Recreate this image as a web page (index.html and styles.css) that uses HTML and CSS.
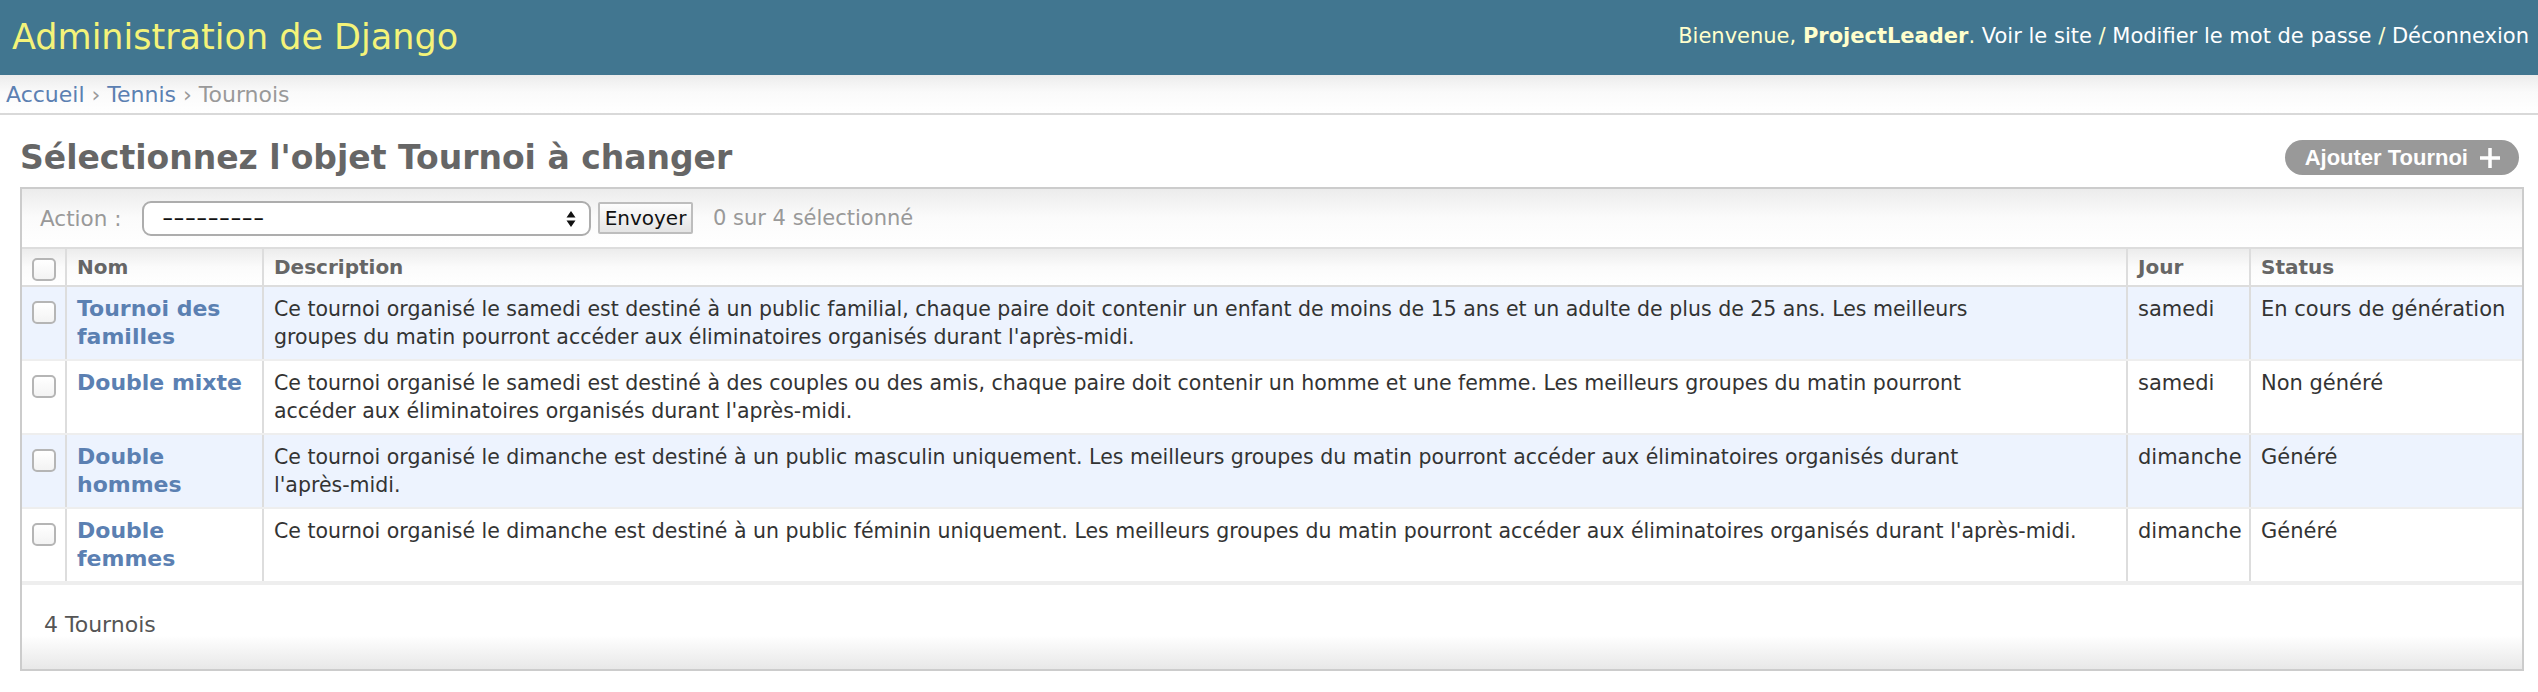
FILE: index.html
```html
<!DOCTYPE html>
<html lang="fr">
<head>
<meta charset="utf-8">
<title>Sélectionnez l'objet Tournoi à changer | Site d'administration de Django</title>
<link rel="stylesheet" href="styles.css">
</head>
<body>
<div class="header">
  <div class="branding">Administration de Django</div>
  <div class="user-tools">Bienvenue, <strong>ProjectLeader</strong>. <a href="#">Voir le site</a> / <a href="#">Modifier le mot de passe</a> / <a href="#">Déconnexion</a></div>
</div>
<div class="breadcrumbs"><a href="#">Accueil</a> › <a href="#">Tennis</a> › Tournois</div>
<div class="content">
  <div class="title-row">
    <h1 class="page-title">Sélectionnez l'objet Tournoi à changer</h1>
    <a class="addlink" href="#">Ajouter Tournoi
      <svg class="plus" width="24" height="24" viewBox="0 0 24 24"><path d="M12 2v20M2 12h20" stroke="#fff" stroke-width="3.5" fill="none"/></svg>
    </a>
  </div>
  <div class="module">
    <div class="actions">
      <span class="action-label">Action :</span>
      <div class="select">
        <span class="select-text">---------</span>
        <svg class="select-arrows" width="10" height="18" viewBox="0 0 10 18"><path d="M5 1 L9.5 7.5 H0.5 Z M5 17 L9.5 10.5 H0.5 Z" fill="#111"/></svg>
      </div>
      <button class="go" type="button">Envoyer</button>
      <span class="counter">0 sur 4 sélectionné</span>
    </div>
    <table class="result-list">
      <colgroup>
        <col class="c-check"><col class="c-name"><col class="c-desc"><col class="c-day"><col class="c-status">
      </colgroup>
      <thead>
        <tr>
          <th class="check"><span class="cb"></span></th>
          <th>Nom</th>
          <th>Description</th>
          <th>Jour</th>
          <th>Status</th>
        </tr>
      </thead>
      <tbody>
        <tr class="row1">
          <td class="check"><span class="cb"></span></td>
          <th class="name"><a href="#">Tournoi des familles</a></th>
          <td class="desc">Ce tournoi organisé le samedi est destiné à un public familial, chaque paire doit contenir un enfant de moins de 15 ans et un adulte de plus de 25 ans. Les meilleurs<br>groupes du matin pourront accéder aux éliminatoires organisés durant l'après-midi.</td>
          <td>samedi</td>
          <td>En cours de génération</td>
        </tr>
        <tr class="row2">
          <td class="check"><span class="cb"></span></td>
          <th class="name"><a href="#">Double mixte</a></th>
          <td class="desc">Ce tournoi organisé le samedi est destiné à des couples ou des amis, chaque paire doit contenir un homme et une femme. Les meilleurs groupes du matin pourront<br>accéder aux éliminatoires organisés durant l'après-midi.</td>
          <td>samedi</td>
          <td>Non généré</td>
        </tr>
        <tr class="row1">
          <td class="check"><span class="cb"></span></td>
          <th class="name"><a href="#">Double hommes</a></th>
          <td class="desc">Ce tournoi organisé le dimanche est destiné à un public masculin uniquement. Les meilleurs groupes du matin pourront accéder aux éliminatoires organisés durant<br>l'après-midi.</td>
          <td>dimanche</td>
          <td>Généré</td>
        </tr>
        <tr class="row2">
          <td class="check"><span class="cb"></span></td>
          <th class="name"><a href="#">Double femmes</a></th>
          <td class="desc">Ce tournoi organisé le dimanche est destiné à un public féminin uniquement. Les meilleurs groupes du matin pourront accéder aux éliminatoires organisés durant l'après-midi.</td>
          <td>dimanche</td>
          <td>Généré</td>
        </tr>
      </tbody>
    </table>
    <p class="paginator">4 Tournois</p>
  </div>
</div>
</body>
</html>
```
FILE: styles.css
```css
html, body {
  margin: 0;
  padding: 0;
  background: #fff;
}
body {
  font-family: "DejaVu Sans", "Lucida Grande", Verdana, sans-serif;
  color: #333;
  font-size: 20px;
}
a {
  text-decoration: none;
}

/* Header */
.header {
  height: 75px;
  background: #417690;
  display: flex;
  align-items: center;
  justify-content: space-between;
  padding: 0 9px 0 12px;
  box-sizing: border-box;
}
.branding {
  color: #f4f379;
  font-size: 35px;
  line-height: 42px;
  padding-bottom: 2px;
}
.user-tools {
  color: #ffc;
  font-size: 21px;
  padding-bottom: 4px;
}
.user-tools a {
  color: #fff;
}

/* Breadcrumbs */
.breadcrumbs {
  height: 38px;
  line-height: 40px;
  padding: 0 6px;
  border-bottom: 2px solid #d9d9d9;
  background: linear-gradient(#ececec 0%, #fafafa 45%, #fff 100%);
  color: #999;
  font-size: 22px;
}
.breadcrumbs a {
  color: #5b80b2;
}

/* Content */
.content {
  padding: 25px 14px 0 20px;
}
.title-row {
  display: flex;
  align-items: center;
  justify-content: space-between;
  height: 35px;
  padding-right: 5px;
  margin-bottom: 12px;
}
.page-title {
  margin: 0;
  font-size: 33px;
  line-height: 35px;
  color: #666;
  font-weight: bold;
}
.addlink {
  display: flex;
  align-items: center;
  gap: 10px;
  height: 35px;
  box-sizing: border-box;
  padding: 0 17px 0 20px;
  border-radius: 18px;
  background: #999;
  color: #fff;
  font-family: "Liberation Sans", Arial, sans-serif;
  font-weight: bold;
  font-size: 22px;
}
.plus {
  display: block;
}

/* Module */
.module {
  border: 2px solid #ccc;
}
.actions {
  display: flex;
  align-items: center;
  height: 58px;
  padding-left: 18px;
  border-bottom: 2px solid #ddd;
  background: linear-gradient(#ececec 0%, #fbfbfb 50%, #fff 100%);
}
.action-label {
  width: 102px;
  color: #999;
  font-size: 21.5px;
}
.select {
  position: relative;
  width: 449px;
  height: 35px;
  box-sizing: border-box;
  border: 2px solid #adadad;
  border-radius: 9px;
  background: #fff;
  display: flex;
  align-items: center;
  padding-left: 18px;
  color: #111;
  font-size: 21px;
}
.select-text {
  display: inline-block;
  transform: scaleX(1.5);
  transform-origin: left center;
}
.select-arrows {
  position: absolute;
  right: 13px;
  top: 7px;
}
.go {
  margin-left: 7px;
  width: 95px;
  height: 32px;
  box-sizing: border-box;
  border: 2px solid #bdbdbd;
  border-radius: 2px;
  background: linear-gradient(#fdfdfd, #e4e4e4);
  font-family: "DejaVu Sans", sans-serif;
  font-size: 20px;
  color: #111;
  padding: 0;
}
.counter {
  margin-left: 20px;
  color: #999;
  font-size: 21px;
}

/* Table */
.result-list {
  width: 100%;
  border-collapse: collapse;
  table-layout: fixed;
}
.c-check { width: 44px; }
.c-name { width: 197px; }
.c-desc { width: 1864px; }
.c-day { width: 123px; }
.result-list th,
.result-list td {
  text-align: left;
  vertical-align: top;
  font-size: 21px;
  line-height: 28px;
  border-left: 2px solid #ddd;
}
.result-list thead th {
  padding: 4px 10px;
  color: #666;
  font-size: 20px;
  font-weight: bold;
  border-bottom: 2px solid #ddd;
  background: linear-gradient(#ececec 0%, #fbfbfb 50%, #fff 100%);
}
.result-list tbody td,
.result-list tbody th {
  padding: 8px 10px;
  border-bottom: 2px solid #eee;
}
.result-list tbody td.desc {
  font-size: 20.5px;
  padding-right: 4px;
}
.result-list .check {
  border-left: none;
  padding-left: 0;
  padding-right: 0;
}
.result-list tbody th.name {
  padding-right: 14px;
  font-size: 22px;
  font-weight: bold;
}
.name a {
  color: #5b80b2;
}
tr.row1 td, tr.row1 th {
  background: #edf3fe;
}
tr.row2 td, tr.row2 th {
  background: #fff;
}
.cb {
  display: block;
  width: 24px;
  height: 23px;
  box-sizing: border-box;
  margin: 6px auto 0;
  border: 2px solid #b5b5b5;
  border-radius: 5px;
  background: linear-gradient(#fff, #f3f3f3);
}
thead .cb {
  margin-top: 5px;
}

/* Paginator */
.paginator {
  margin: 0;
  height: 84px;
  padding: 0 0 0 22px;
  line-height: 80px;
  color: #555;
  font-size: 22px;
  border-top: 2px solid #eee;
  background: linear-gradient(#fff 0%, #fff 60%, #e8e8e8 100%);
}
```
